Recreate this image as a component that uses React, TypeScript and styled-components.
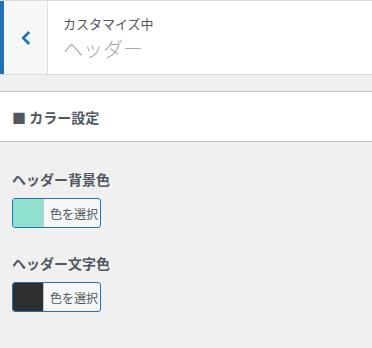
import React from 'react'
import styled, { createGlobalStyle } from 'styled-components'

const GlobalStyle = createGlobalStyle`
  html, body {
    margin: 0;
    padding: 0;
    background: #f0f0f1;
    font-family: "Noto Sans CJK JP", "Noto Sans", sans-serif;
    color: #50575e;
  }
`

const Panel = styled.div`
  width: 372px;
  min-height: 348px;
  background: #f0f0f1;
`

const Header = styled.div`
  display: flex;
  height: 73px;
  background: #fff;
  border-top: 1px solid #dcdcde;
  border-bottom: 1px solid #dcdcde;
`

const BackButton = styled.button`
  display: flex;
  align-items: center;
  justify-content: center;
  width: 48px;
  padding: 1px 0 0;
  margin: 0;
  background: #f6f7f7;
  border: none;
  border-left: 4px solid #2271b1;
  border-right: 1px solid #dcdcde;
  box-sizing: border-box;
  cursor: pointer;
`

const Titles = styled.div`
  display: flex;
  flex-direction: column;
  padding: 14px 0 0 15px;
`

const Notice = styled.span`
  font-size: 13px;
  line-height: 18px;
  color: #50575e;
`

const PanelTitle = styled.h3`
  margin: 3px 0 0;
  font-size: 20px;
  line-height: 26px;
  font-weight: 300;
  color: #a7aaad;
`

const SectionTitle = styled.h3`
  margin: 16px 0 0;
  height: 49px;
  display: flex;
  align-items: center;
  padding: 0 12px;
  background: #fff;
  border-top: 1px solid #c3c4c7;
  border-bottom: 1px solid #c3c4c7;
  font-size: 14px;
  font-weight: 700;
  color: #50575e;
`

const Controls = styled.div`
  display: flex;
  flex-direction: column;
  gap: 25px;
  padding: 27px 12px 0;
`

const Control = styled.div`
  display: flex;
  flex-direction: column;
  align-items: flex-start;
  gap: 9px;
`

const ControlLabel = styled.span`
  font-size: 14px;
  line-height: 20px;
  font-weight: 700;
  color: #50575e;
`

const ColorButton = styled.button`
  display: flex;
  align-items: stretch;
  height: 30px;
  width: 89px;
  padding: 0;
  margin: 0;
  background: #f6f7f7;
  border: 1px solid #2271b1;
  border-radius: 3px;
  overflow: hidden;
  box-sizing: border-box;
  font-family: inherit;
  cursor: pointer;
`

const Swatch = styled.span<{ $color: string }>`
  width: 30px;
  background: ${p => p.$color};
  border-right: 1px solid #c3c4c7;
`

const ButtonText = styled.span`
  flex: 1;
  display: flex;
  align-items: center;
  padding-left: 6px;
  font-size: 12px;
  color: #50575e;
`

const colorControls = [
  { label: 'ヘッダー背景色', color: '#8fe0cc' },
  { label: 'ヘッダー文字色', color: '#2f2f2f' },
]

export default function App() {
  return (
    <>
      <GlobalStyle />
      <Panel>
        <Header>
          <BackButton aria-label="戻る">
            <svg width="10" height="14" viewBox="0 0 10 14">
              <polyline points="8.2,1 2.2,7 8.2,13" fill="none" stroke="#2271b1" strokeWidth="2.6" />
            </svg>
          </BackButton>
          <Titles>
            <Notice>カスタマイズ中</Notice>
            <PanelTitle>ヘッダー</PanelTitle>
          </Titles>
        </Header>
        <SectionTitle>■ カラー設定</SectionTitle>
        <Controls>
          {colorControls.map(c => (
            <Control key={c.label}>
              <ControlLabel>{c.label}</ControlLabel>
              <ColorButton>
                <Swatch $color={c.color} />
                <ButtonText>色を選択</ButtonText>
              </ColorButton>
            </Control>
          ))}
        </Controls>
      </Panel>
    </>
  )
}
